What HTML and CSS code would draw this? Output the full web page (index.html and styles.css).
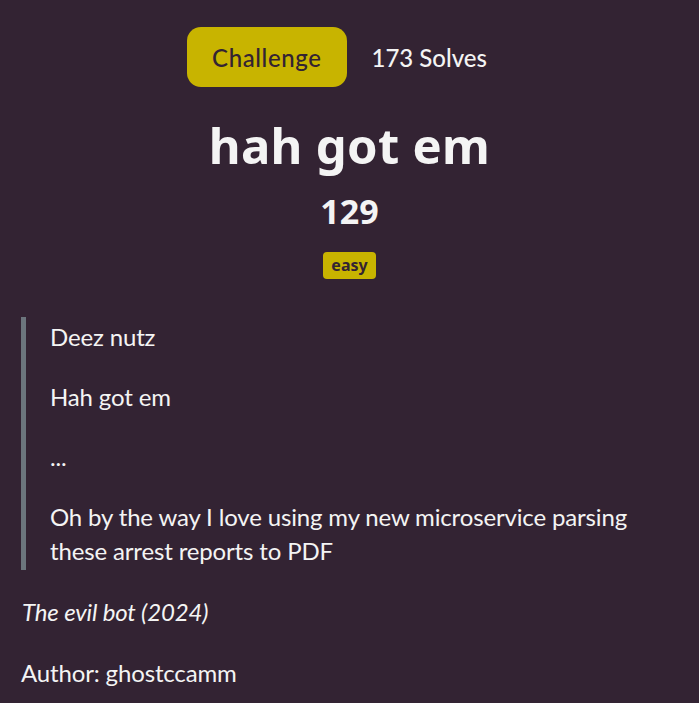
FILE: index.html
```html
<!DOCTYPE html>
<html lang="en">
<head>
<meta charset="utf-8">
<title>hah got em</title>
<link rel="stylesheet" href="styles.css">
</head>
<body>
<div class="page">
  <div class="tabs">
    <span class="tab active">Challenge</span>
    <span class="tab">173 Solves</span>
  </div>
  <h1 class="title">hah got em</h1>
  <div class="points">129</div>
  <div class="tags"><span class="badge">easy</span></div>
  <blockquote class="quote">
    <p>Deez nutz</p>
    <p>Hah got em</p>
    <p>...</p>
    <p>Oh by the way I love using my new microservice parsing these arrest reports to PDF</p>
  </blockquote>
  <p class="cite">The evil bot (2024)</p>
  <p class="author">Author: ghostccamm</p>
</div>
</body>
</html>
```
FILE: styles.css
```css
html, body {
  margin: 0;
  padding: 0;
  background: #332333;
}
.page {
  padding: 27px 21px 0 21px;
  color: #f4f4f4;
  font-family: Lato, "Open Sans", sans-serif;
  font-size: 24px;
  letter-spacing: -0.15px;
}
.tabs {
  display: flex;
  justify-content: center;
  align-items: center;
  font-family: Lato, sans-serif;
  font-size: 24px;
  font-weight: 500;
}
.tab {
  display: flex;
  align-items: center;
  justify-content: center;
  height: 60px;
  padding: 0 25px;
  letter-spacing: 0;
}
.tab.active {
  background: #c8b400;
  color: #332333;
  border-radius: 14px;
  letter-spacing: 0.6px;
}
.title {
  margin: 28px 0 0 0;
  text-align: center;
  font-family: "Noto Sans", sans-serif;
  font-weight: 700;
  font-size: 49px;
  line-height: 60px;
  letter-spacing: 0.3px;
}
.points {
  margin-top: 14px;
  text-align: center;
  font-family: "Noto Sans", sans-serif;
  font-weight: 700;
  font-size: 34px;
  line-height: 44px;
  letter-spacing: 0;
}
.tags {
  display: flex;
  justify-content: center;
  margin-top: 19px;
}
.badge {
  background: #c8b400;
  color: #332333;
  font-family: "Noto Sans", sans-serif;
  font-weight: 700;
  font-size: 16px;
  line-height: 27px;
  height: 27px;
  padding: 0 8px;
  border-radius: 4px;
  letter-spacing: 0;
}
.quote {
  margin: 38px 0 0 0;
  padding: 3px 0 2px 24px;
  border-left: 5px solid #6c757d;
}
.quote p {
  margin: 0 0 26px 0;
  line-height: 34px;
}
.quote p:last-child {
  margin-bottom: 0;
}
.cite {
  margin: 25px 0 0 1px;
  font-style: italic;
  line-height: 34px;
}
.author {
  margin: 27px 0 0 0;
  line-height: 34px;
}
```
